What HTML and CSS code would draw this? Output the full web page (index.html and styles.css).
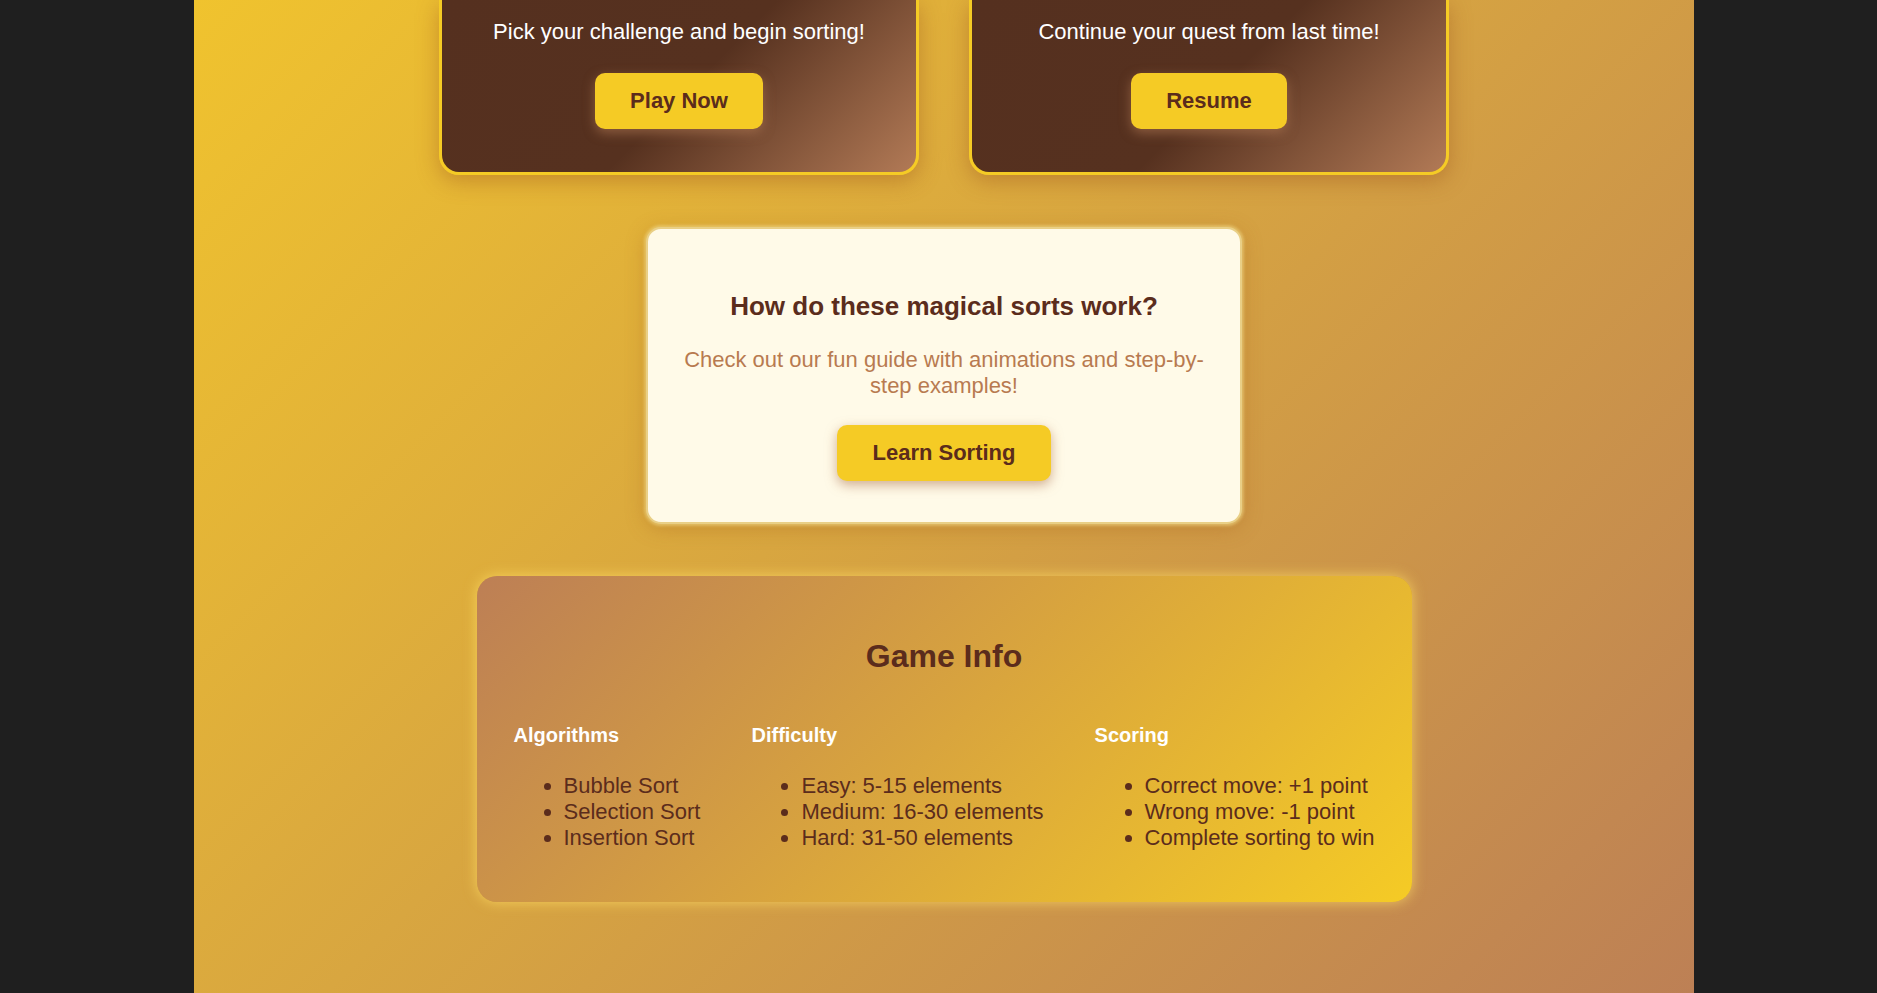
FILE: index.html
```html
<!DOCTYPE html>
<html lang="en">
<head>
<meta charset="utf-8">
<title>Sorting Quest</title>
<link rel="stylesheet" href="styles.css">
</head>
<body>
<div class="page">
  <section class="modes">
    <div class="mode-card">
      <p class="mode-text">Pick your challenge and begin sorting!</p>
      <a class="btn" href="#">Play Now</a>
    </div>
    <div class="mode-card">
      <p class="mode-text">Continue your quest from last time!</p>
      <a class="btn" href="#">Resume</a>
    </div>
  </section>

  <section class="learn-card">
    <h3 class="learn-title">How do these magical sorts work?</h3>
    <p class="learn-text">Check out our fun guide with animations and step-by-step examples!</p>
    <a class="btn" href="#">Learn Sorting</a>
  </section>

  <section class="info-card">
    <h2 class="info-title">Game Info</h2>
    <div class="info-cols">
      <div class="info-col">
        <h4 class="col-title">Algorithms</h4>
        <ul class="col-list">
          <li>Bubble Sort</li>
          <li>Selection Sort</li>
          <li>Insertion Sort</li>
        </ul>
      </div>
      <div class="info-col">
        <h4 class="col-title">Difficulty</h4>
        <ul class="col-list">
          <li>Easy: 5-15 elements</li>
          <li>Medium: 16-30 elements</li>
          <li>Hard: 31-50 elements</li>
        </ul>
      </div>
      <div class="info-col">
        <h4 class="col-title">Scoring</h4>
        <ul class="col-list">
          <li>Correct move: +1 point</li>
          <li>Wrong move: -1 point</li>
          <li>Complete sorting to win</li>
        </ul>
      </div>
    </div>
  </section>
</div>
</body>
</html>
```

FILE: styles.css
```css
html, body {
  margin: 0;
  padding: 0;
}

body {
  background: #1f1f1f;
  font-family: "Liberation Sans", Arial, sans-serif;
  font-size: 22px;
  overflow: hidden;
}

.page {
  width: 1500px;
  min-height: 993px;
  margin-left: 194px;
  background: linear-gradient(135deg, #f0c32e 0%, #d8a640 45%, #bd8055 100%);
  display: flex;
  flex-direction: column;
  align-items: center;
  gap: 52px;
}

/* top mode cards */
.modes {
  display: flex;
  gap: 50px;
}

.mode-card {
  width: 480px;
  box-sizing: border-box;
  border: 3px solid #f5cb25;
  border-top: none;
  border-radius: 0 0 20px 20px;
  padding: 19px 35px 35px;
  background: linear-gradient(135deg, #55301f 0%, #56311f 52%, #b27a56 100%);
  box-shadow: 0 6px 22px rgba(150, 75, 25, 0.4);
  display: flex;
  flex-direction: column;
  align-items: center;
  text-align: center;
}

.mode-text {
  margin: 0 0 21px;
  color: #ffffff;
  font-size: 22px;
  line-height: 25px;
}

.btn {
  display: inline-block;
  margin: 8px 0;
  padding: 15px 35px;
  background: #f5cb25;
  color: #5b2c1c;
  font-weight: 700;
  font-size: 22px;
  line-height: 26px;
  border-radius: 10px;
  text-decoration: none;
  box-shadow: 0 4px 12px rgba(176, 122, 85, 0.6);
}

/* learn card */
.learn-card {
  width: 596px;
  box-sizing: border-box;
  border: 2px solid #e9cf86;
  border-radius: 15px;
  padding: 36px 30px 33px;
  background: #fffae8;
  box-shadow: 0 0 3px 2px rgba(240, 215, 130, 0.6), 0 4px 20px rgba(160, 90, 25, 0.35);
  display: flex;
  flex-direction: column;
  align-items: center;
  text-align: center;
}

.learn-title {
  margin: 26px 0 26px;
  color: #5b2c1c;
  font-size: 26px;
  line-height: 30px;
  font-weight: 700;
}

.learn-text {
  margin: 0 0 18px;
  color: #b87a50;
  font-size: 22px;
  line-height: 26px;
}

/* game info */
.info-card {
  width: 935px;
  box-sizing: border-box;
  border-radius: 20px;
  padding: 31px 37px 29px;
  background: linear-gradient(135deg, #bd7f55 0%, #f5cb25 100%);
  box-shadow: 0 0 14px rgba(255, 222, 100, 0.75);
}

.info-title {
  margin: 31px 0 23px;
  color: #5b2c1c;
  font-size: 32px;
  line-height: 37px;
  font-weight: 700;
  text-align: center;
}

.info-cols {
  display: flex;
  justify-content: space-between;
}

.col-title {
  margin: 26px 0 26px;
  color: #ffffff;
  font-size: 20px;
  line-height: 23px;
  font-weight: 700;
}

.col-list {
  margin: 0 0 22px;
  padding-left: 50px;
  color: #5b2c1c;
  font-size: 22px;
  line-height: 26px;
}
```
